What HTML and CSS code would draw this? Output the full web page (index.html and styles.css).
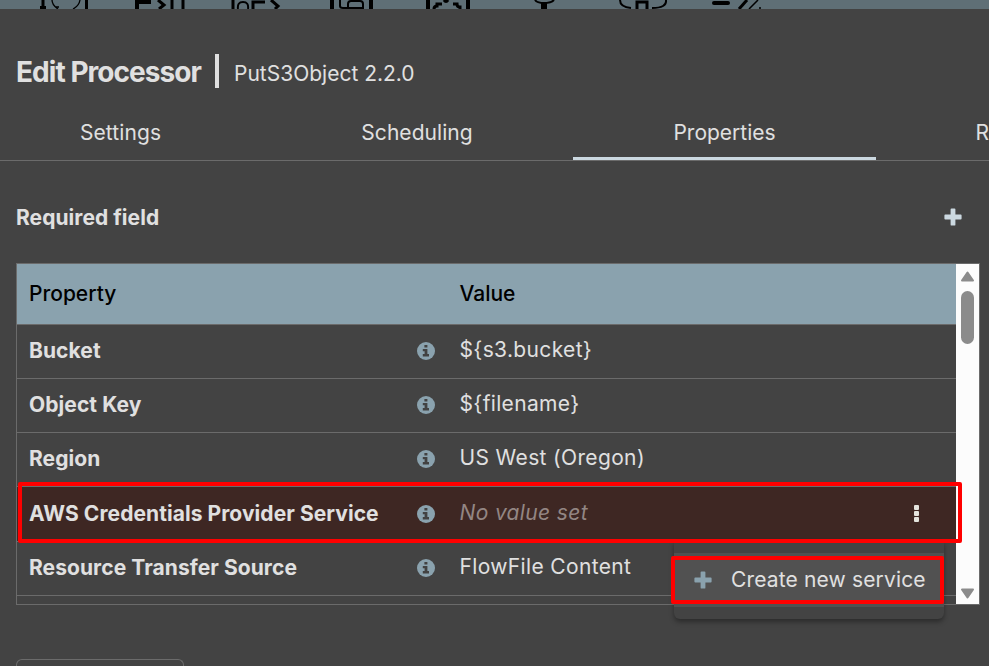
FILE: index.html
```html
<!DOCTYPE html>
<html lang="en">
<head>
<meta charset="utf-8">
<title>Edit Processor</title>
<link rel="stylesheet" href="styles.css">
</head>
<body>
<svg class="defs" width="0" height="0" aria-hidden="true">
  <symbol id="info" viewBox="0 0 18 18"><circle cx="9" cy="9" r="9" fill="#8aa2ae"/><path d="M7.4 2.9h3v2.7h-3zM5.8 7h4.6v5.1H12v2.4H5.8v-2.4h1.8V9.3H5.8z" fill="#424242"/></symbol>
  <symbol id="plus" viewBox="0 0 18 18"><path d="M7.5 .4h3q.9 0 .9.9v5.3h5.3q.9 0 .9.9v3q0 .9-.9.9h-5.3v5.3q0 .9-.9.9h-3q-.9 0-.9-.9v-5.3H1.3q-.9 0-.9-.9v-3q0-.9.9-.9h5.3V1.3q0-.9.9-.9z" fill="currentColor"/></symbol>
</svg>
<header class="toolbar">
  <svg width="989" height="9" viewBox="0 0 989 9" fill="none" stroke="#000" stroke-width="2">
    <path d="M43 0v6M40 7.5h6" stroke-width="3"/><path d="M52 0q0 5 6 9M55 7h4M80 0q-1 6-7 9" stroke-width="1.3"/><path d="M86.500 0v9" stroke-width="3"/>
    <path d="M137 9V2h14" stroke-width="4"/><path d="M158 0l6 5-5 4" stroke-width="3"/><path d="M172 0v9M183 0v9" stroke-width="3"/>
    <path d="M233 0v9M253 9V2h12" stroke-width="3"/><path d="M238 9q-1-7 5-7t5 7"/><path d="M271 0l7 6-3 3" stroke-width="3"/>
    <path d="M332 0v9M371 0v9" stroke-width="4"/><path d="M340 0v6q0 2 3 2h20V4q0-3-3-3h-9q-3 0-3 3v4"/>
    <path d="M428 0v9M468 0v9" stroke-width="4"/><path d="M434 9q0-3 3-3V4h5M444 0q2 3 4 0M453 4h4q0 3 3 3v2" stroke-width="3"/>
    <path d="M535 0q2 3 9 3t10-3"/><path d="M544 3v6" stroke-width="6"/>
    <path d="M620 0q0 7 11 8M666 0q1 8-14 8"/><path d="M637 9V2h10v7" stroke-width="3"/>
    <path d="M714 3h14" stroke-width="4" stroke-linecap="round"/><path d="M747 0l-8 9" stroke-width="3"/><path d="M758 0l-9 9M759 8h2" stroke-width="1.5"/>
  </svg>
</header>
<main class="dialog">
  <div class="heading"><h1>Edit Processor</h1><i class="divider"></i><span class="type">PutS3Object 2.2.0</span></div>
  <nav class="tabs">
    <a class="tab tab-settings">Settings</a><a class="tab tab-scheduling">Scheduling</a><a class="tab tab-properties active">Properties</a><a class="tab tab-rel">R</a>
  </nav>
  <div class="required"><strong>Required field</strong><svg class="add" width="18" height="18"><use href="#plus"/></svg></div>
  <section class="table">
    <div class="rows">
      <div class="row head"><span>Property</span><span></span><span class="val">Value</span></div>
      <div class="row"><b>Bucket</b><svg width="18" height="18"><use href="#info"/></svg><span class="val">${s3.bucket}</span></div>
      <div class="row"><b>Object Key</b><svg width="18" height="18"><use href="#info"/></svg><span class="val">${filename}</span></div>
      <div class="row"><b>Region</b><svg width="18" height="18"><use href="#info"/></svg><span class="val">US West (Oregon)</span></div>
      <div class="row invalid"><b>AWS Credentials Provider Service</b><svg width="18" height="18"><use href="#info"/></svg><span class="val unset">No value set</span><span class="more"><i></i><i></i><i></i></span></div>
      <div class="row"><b>Resource Transfer Source</b><svg width="18" height="18"><use href="#info"/></svg><span class="val">FlowFile Content</span></div>
    </div>
    <div class="scrollbar">
      <svg width="15" height="11" viewBox="0 0 15 11"><path d="M7.5 1.500L13 9.500H2z" fill="#8b8b8b" stroke="#8b8b8b" stroke-width="2" stroke-linejoin="round"/></svg>
      <i class="thumb"></i>
      <svg class="down" width="15" height="11" viewBox="0 0 15 11"><path d="M2 1.500h11L7.500 9.500z" fill="#8b8b8b" stroke="#8b8b8b" stroke-width="2" stroke-linejoin="round"/></svg>
    </div>
  </section>
  <div class="verify"></div>
</main>
<div class="menu"><div class="item"><svg width="18" height="18"><use href="#plus"/></svg><span>Create new service</span></div></div>
<div class="mark mark-row"></div>
<div class="mark mark-menu"></div>
</body>
</html>
```
FILE: styles.css
```css
* { box-sizing: border-box; }
body { margin: 0; width: 989px; height: 666px; overflow: hidden; background: #434343; color: #e0e0e0; font: 21px/30px Inter, sans-serif; position: relative; }
.defs { position: absolute; }
svg { display: block; flex: none; }
.toolbar { height: 9px; background: #5f6f76; }
.heading { display: flex; align-items: center; height: 34px; margin: 45px 0 0 16px; }
h1 { margin: 2px 0 0; width: 199px; font-size: 28px; font-weight: 650; letter-spacing: -.95px; white-space: nowrap; }
.divider { width: 4px; height: 34px; background: #e0e0e0; }
.type { margin: 6px 0 0 15px; white-space: nowrap; }
.tabs { display: flex; height: 73px; margin-left: -20px; border-bottom: 1px solid #6b6b6b; overflow: hidden; }
.tab { flex: none; display: flex; justify-content: center; padding-top: 30px; height: 72px; }
.tab-settings { width: 281px; letter-spacing: .1px; }
.tab-scheduling { width: 312px; letter-spacing: .05px; }
.tab-properties { width: 303px; }
.tab-rel { width: 113px; justify-content: flex-start; padding-left: 99.500px; }
.active { border-bottom: 3px solid #cbd8e0; }
.required { display: flex; justify-content: space-between; align-items: center; height: 30px; margin: 42px 27px 0 16px; }
.required strong { font-weight: 650; letter-spacing: .05px; }
.add { color: #cbd8e0; margin-top: -2px; }
.table { display: flex; width: 964px; height: 342px; margin: 30px 0 0 16px; border: 1px solid #6b6b6b; overflow: hidden; }
.rows { width: 939px; }
.row { display: grid; grid-template-columns: 388px 42.500px 1fr 40px; align-items: center; height: 54px; padding: 0 19px 0 12px; border-bottom: 1px solid #6b6b6b; white-space: nowrap; }
.row b { margin-top: -1px; font-weight: 650; letter-spacing: .07px; }
.row svg { margin-top: -1px; }
.row .val { margin-top: -3px; letter-spacing: .35px; }
.row.head { height: 61px; background: #8aa2ae; color: #000; font-weight: 500; }
.row.head .val { margin-top: 0; letter-spacing: 0; }
.row.invalid { height: 55px; background: #3e2723; }
.row.invalid b { margin-top: 0; }
.row .unset { color: #938683; font-style: italic; }
.more { display: flex; flex-direction: column; gap: 1px; align-items: center; justify-self: center; margin: -2px 1px 0 0; }
.more i { width: 5px; height: 5px; border-radius: 1px; background: #e4e4dd; }
.scrollbar { display: flex; flex-direction: column; align-items: center; width: 23px; background: #fcfcfc; padding: 7px 0 5px; }
.thumb { width: 13px; height: 53px; margin-top: 9px; border-radius: 7px; background: #8b8b8b; }
.down { margin-top: auto; }
.verify { width: 168px; height: 7px; margin: 54px 0 0 16px; border: 1px solid #6b6b6b; border-bottom: 0; border-radius: 6px 6px 0 0; }
.menu { position: absolute; left: 674px; top: 541px; width: 270px; height: 78px; padding-top: 12px; border-radius: 0 0 6px 6px; background: #434343; box-shadow: 0 3px 5px rgba(0,0,0,.35); }
.item { display: flex; align-items: center; gap: 19px; height: 54px; padding-left: 20px; background: #515151; letter-spacing: .15px; white-space: nowrap; }
.item svg { color: #8aa2ae; margin-top: -1px; }
.mark { position: absolute; border: 4px solid #f00; border-radius: 2px; }
.mark-row { left: 18px; top: 482px; width: 944px; height: 61px; }
.mark-menu { left: 671px; top: 556px; width: 273px; height: 48px; }
```
